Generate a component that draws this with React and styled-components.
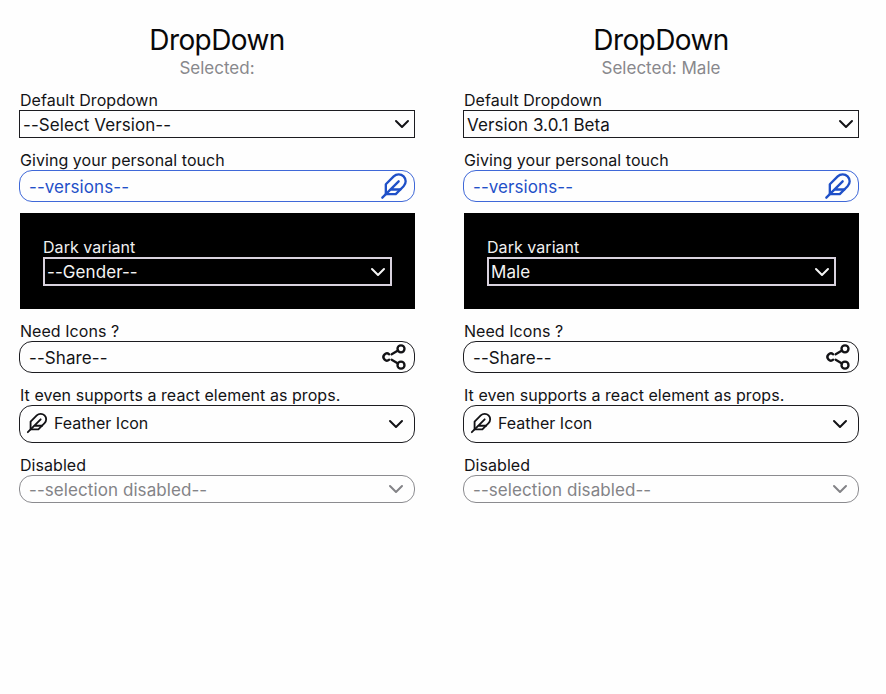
import React from "react";
import styled, { createGlobalStyle } from "styled-components";

const Global = createGlobalStyle`
  *, *::before, *::after { box-sizing: border-box; }
  body { margin: 0; background: #fefefe; font-family: Inter, "Liberation Sans", sans-serif; color: #131316; }
`;

const Page = styled.main`
  display: grid;
  grid-template-columns: 396px 396px;
  column-gap: 48px;
  height: 694px;
  padding: 23px 0 0 19px;
  overflow: hidden;
`;

const Column = styled.section`
  display: flex;
  flex-direction: column;
`;

const Title = styled.h1`
  margin: 0;
  height: 34px;
  line-height: 34px;
  font-size: 28px;
  font-weight: 400;
  text-align: center;
  letter-spacing: -0.6px;
  color: #08080a;
`;

const Selected = styled.p`
  margin: 0 0 14px;
  height: 20px;
  line-height: 22px;
  font-size: 17px;
  font-weight: 400;
  text-align: center;
  color: #88888c;
`;

const Field = styled.div`
  display: flex;
  flex-direction: column;
  margin-bottom: ${(p) => p.$gap || 0}px;
`;

const Label = styled.label`
  height: 19px;
  line-height: 19px;
  padding-left: ${(p) => (p.$dark ? 0 : 1)}px;
  font-size: 16px;
  font-weight: 400;
  letter-spacing: 0.05px;
  white-space: nowrap;
`;

const tones = {
  ink: { line: "#1c1c20", text: "#131316" },
  blue: { line: "#3f68d8", text: "#1f50c8" },
  light: { line: "#d9d2de", text: "#f4f4f4" },
  muted: { line: "#8b8b8f", text: "#838387" },
};

const Select = styled.div`
  display: flex;
  align-items: center;
  justify-content: space-between;
  height: ${(p) => p.$height}px;
  padding: 0 ${(p) => p.$right}px 0 ${(p) => p.$left}px;
  border: ${(p) => (p.$tone === "light" ? 2 : 1)}px solid ${(p) => tones[p.$tone].line};
  border-radius: ${(p) => (p.$round ? 13 : 0)}px;
  color: ${(p) => tones[p.$tone].text};
  svg { flex: none; }
`;

const Value = styled.span`
  display: flex;
  align-items: center;
  gap: 6px;
  padding-top: ${(p) => (p.$rich ? 0 : 1)}px;
  padding-bottom: ${(p) => (p.$rich ? 2 : 0)}px;
  font-size: ${(p) => (p.$rich ? 16 : 17)}px;
  font-weight: 400;
  line-height: 22px;
  white-space: nowrap;
  letter-spacing: ${(p) => (p.$rich ? 0 : 0.08)}px;
`;

const DarkPanel = styled.div`
  height: 96px;
  margin: 0 0 13px 1px;
  padding: 25px 23px 0;
  background: #000;
  color: #f0f0f0;
`;

function Icon({ size, children }) {
  return (
    <svg width={size} height={size} viewBox="0 0 24 24" fill="none" stroke="currentColor"
      strokeWidth="2" strokeLinecap="round" strokeLinejoin="round">
      {children}
    </svg>
  );
}

const Chevron = () => (
  <Icon size={24}><path d="M6 9l6 6 6-6" /></Icon>
);

const FeatherIcon = ({ size }) => (
  <Icon size={size}>
    <path d="M20.24 12.24a6 6 0 0 0-8.49-8.49L5 10.5V19h8.5z" />
    <path d="M16 8L2 22M17.5 15H9" />
  </Icon>
);

const ShareIcon = () => (
  <Icon size={28}>
    <circle cx="18" cy="5" r="3" />
    <path d="M7.9 9.7a3 3 0 1 0 0 4.6" />
    <circle cx="18" cy="19" r="3" />
    <path d="M10 14.3l5.4 3.2M15.41 6.51l-5.4 3.2" />
  </Icon>
);

function Demo({ selected, version, gender }) {
  return (
    <Column>
      <Title>DropDown</Title>
      <Selected>Selected: {selected}</Selected>
      <Field $gap={13}>
        <Label>Default Dropdown</Label>
        <Select $tone="ink" $height={28} $left={3} $right={0}>
          <Value>{version}</Value><Chevron />
        </Select>
      </Field>
      <Field $gap={11}>
        <Label>Giving your personal touch</Label>
        <Select $tone="blue" $height={32} $left={9} $right={6} $round>
          <Value>--versions--</Value><FeatherIcon size={28} />
        </Select>
      </Field>
      <DarkPanel>
        <Field>
          <Label $dark>Dark variant</Label>
          <Select $tone="light" $height={29} $left={2} $right={0}>
            <Value>{gender}</Value><Chevron />
          </Select>
        </Field>
      </DarkPanel>
      <Field $gap={13}>
        <Label>Need Icons ?</Label>
        <Select $tone="ink" $height={32} $left={9} $right={6} $round>
          <Value>--Share--</Value><ShareIcon />
        </Select>
      </Field>
      <Field $gap={13}>
        <Label>It even supports a react element as props.</Label>
        <Select $tone="ink" $height={38} $left={6} $right={6} $round>
          <Value $rich><FeatherIcon size={22} />Feather Icon</Value><Chevron />
        </Select>
      </Field>
      <Field>
        <Label>Disabled</Label>
        <Select $tone="muted" $height={28} $left={9} $right={6} $round>
          <Value>--selection disabled--</Value><Chevron />
        </Select>
      </Field>
    </Column>
  );
}

export default function App() {
  return (
    <>
      <Global />
      <Page>
        <Demo selected="" version="--Select Version--" gender="--Gender--" />
        <Demo selected="Male" version="Version 3.0.1 Beta" gender="Male" />
      </Page>
    </>
  );
}
